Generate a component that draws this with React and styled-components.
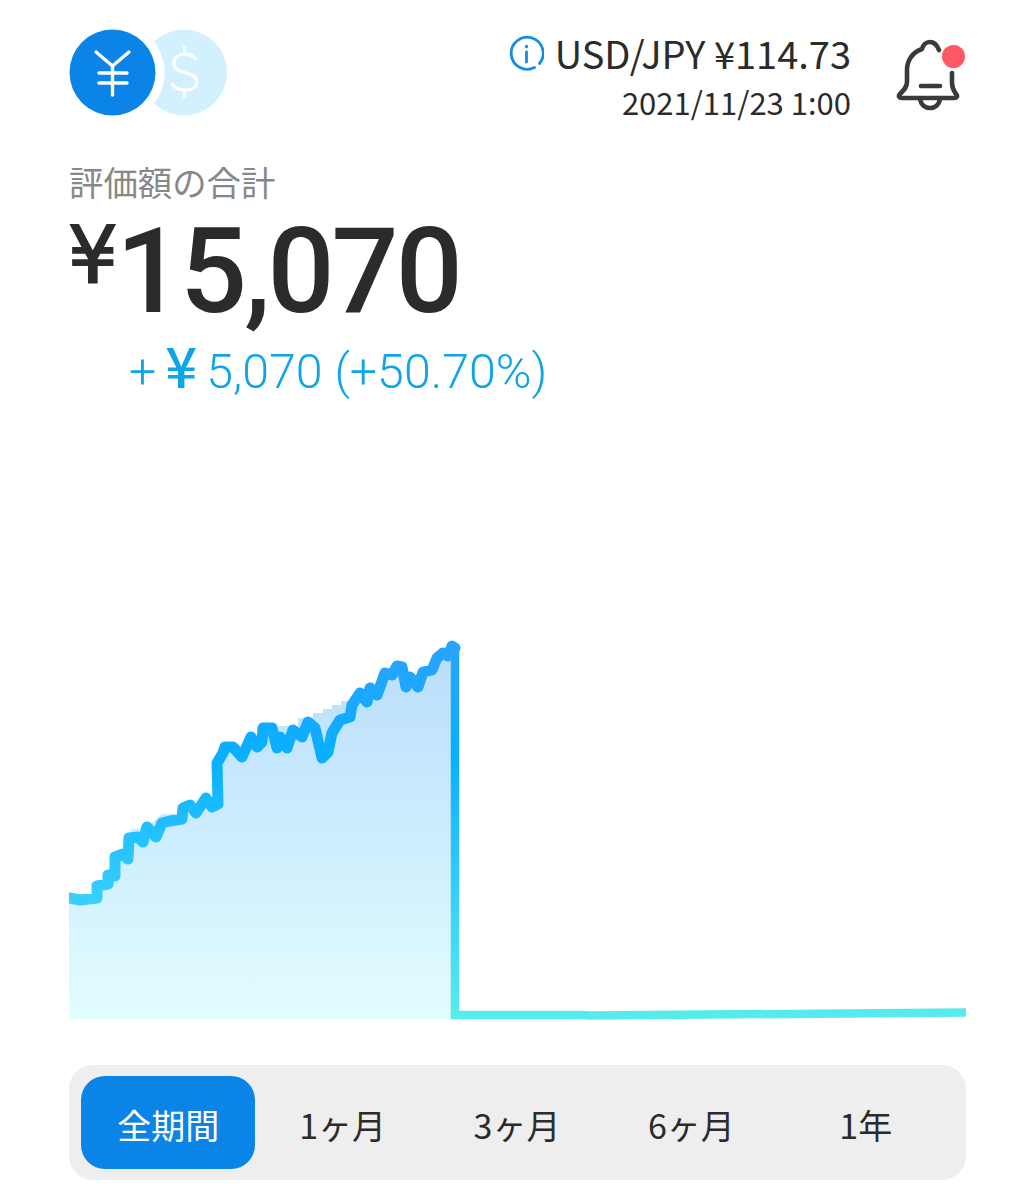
import React from 'react';
import styled, { createGlobalStyle } from 'styled-components';

const GlobalStyle = createGlobalStyle`
  html, body {
    margin: 0;
    padding: 0;
    background: #fff;
  }
  body {
    font-family: "Noto Sans CJK JP", "Noto Sans", sans-serif;
    color: #2b2b2b;
  }
`;

const Page = styled.div`
  width: 1035px;
  height: 1200px;
  box-sizing: border-box;
  padding: 29px 69px 0;
  overflow: hidden;
`;

const Header = styled.header`
  display: flex;
  justify-content: space-between;
  align-items: flex-start;
  height: 87px;
`;

const RateBlock = styled.div`
  display: flex;
  margin-left: auto;
  gap: 45px;
`;

const RateText = styled.div`
  display: flex;
  flex-direction: column;
  align-items: flex-end;
`;

const RateRow = styled.div`
  display: flex;
  align-items: center;
  gap: 11px;
  height: 48px;
  font-size: 38px;
  line-height: 48px;
`;

const RateDate = styled.div`
  margin-top: 5px;
  font-size: 31px;
  line-height: 40px;
`;

const BellWrap = styled.div`
  position: relative;
  width: 70px;
  height: 87px;
`;

const Dot = styled.span`
  position: absolute;
  top: 16px;
  right: 1px;
  width: 23px;
  height: 23px;
  border-radius: 50%;
  background: #ff5763;
`;

const Summary = styled.section`
  margin-top: 42px;
`;

const Label = styled.div`
  font-size: 34.4px;
  line-height: 46px;
  color: #888;
`;

const Total = styled.div`
  display: flex;
  align-items: flex-start;
  height: 118px;
  margin-top: 9px;
  font-family: Roboto, sans-serif;
  font-weight: 500;
  font-size: 118px;
  line-height: 118px;
  letter-spacing: -3px;
  color: #2b2b2b;
`;

const TotalSign = styled.span`
  width: 48px;
  margin-left: -1px;
  font-family: "DejaVu Sans", sans-serif;
  font-size: 78px;
  font-weight: 400;
  line-height: 84px;
  letter-spacing: 0;
  -webkit-text-stroke: 2px #2b2b2b;
`;

const Gain = styled.div`
  display: flex;
  align-items: baseline;
  gap: 9px;
  margin: 5px 0 0 60px;
  font-family: Roboto, sans-serif;
  font-weight: 300;
  font-size: 48.3px;
  line-height: 56px;
  color: #0ea5e6;
`;

const GainYen = styled.span`
  font-family: "Noto Sans CJK JP", sans-serif;
  font-weight: 500;
  font-size: 56px;
  line-height: 56px;
`;

const ChartSvg = styled.svg`
  display: block;
  width: 897px;
  height: 380px;
  margin-top: 240px;
`;

const Tabs = styled.nav`
  display: grid;
  grid-template-columns: repeat(5, 1fr);
  box-sizing: border-box;
  height: 115px;
  margin-top: 45px;
  padding: 11px 13px 11px 12px;
  border-radius: 24px;
  background: #eee;
`;

const Tab = styled.div`
  display: flex;
  align-items: center;
  justify-content: center;
  box-sizing: border-box;
  padding-top: 3px;
  border-radius: 24px;
  font-size: 34px;
  color: ${(p) => (p.$active ? '#fff' : '#2b2b2b')};
  background: ${(p) => (p.$active ? '#0a84e6' : 'transparent')};
`;

const line = [
  [69, 898], [80, 900], [97, 898], [97, 886], [108, 884], [108, 875], [115, 876], [115, 857],
  [123, 854], [128, 859], [129, 838], [138, 837], [143, 842], [147, 827], [156, 837], [162, 823],
  [170, 821], [182, 819], [183, 808], [190, 805], [196, 813], [200, 807], [206, 798], [212, 807],
  [218, 804], [217, 763], [223, 753], [225, 747], [233, 747], [242, 757], [251, 737], [257, 747],
  [262, 742], [263, 728], [272, 728], [277, 748], [280, 737], [287, 748], [293, 730], [302, 737],
  [308, 722], [315, 728], [322, 758], [328, 752], [332, 733], [340, 720], [350, 717], [352, 705],
  [360, 693], [367, 702], [370, 688], [377, 695], [385, 673], [392, 675], [397, 666], [402, 667],
  [406, 687], [410, 677], [418, 687], [423, 672], [432, 670], [437, 658], [443, 653], [448, 656],
  [452, 646], [455, 648],
];

// fill follows the line, but with its own stepped top in the flat stretch
const fillTop = [
  ...line.slice(0, 13), [129, 830], [147, 827], [162, 814], [182, 814], [183, 808],
  ...line.slice(19, 35), [280, 726], [298, 726], [298, 718], [313, 718], [313, 713], [323, 713],
  [323, 709], [332, 709], [332, 705], [341, 705], [341, 701], [352, 701],
  ...line.slice(48),
];

const toPoints = (pts) => pts.map((p) => p.join(',')).join(' ');

const periods = ['全期間', '1ヶ月', '3ヶ月', '6ヶ月', '1年'];

function CoinIcon() {
  return (
    <svg width="160" height="87" viewBox="0 0 160 87" fill="none">
      <circle cx="115" cy="43.5" r="43" fill="#d3f0ff" />
      <circle cx="43.5" cy="43.5" r="52" fill="#fff" />
      <circle cx="43.5" cy="43.5" r="43" fill="#0a84e6" />
      <path
        d="M27 23l16.5 14L60 23M43.5 37v29M30 44h28M30 54h28"
        stroke="#fff"
        strokeWidth="3.4"
        strokeLinecap="round"
        strokeLinejoin="round"
      />
      <path
        d="M115.5 18v7M115.5 61v7M127 30c-3-3-7-5-11-5-6 0-11 3-11 9 0 13 23 7 23 19 0 6-6 8-12 8-5 0-10-2-13-6"
        stroke="#fff"
        strokeWidth="3"
        strokeLinecap="round"
        strokeLinejoin="round"
      />
    </svg>
  );
}

function InfoIcon() {
  return (
    <svg width="35" height="35" viewBox="0 0 35 35" fill="none" stroke="#0f8de8" strokeWidth="2.8" strokeLinecap="round">
      <path d="M30.5 27.5A16 16 0 1 0 25.5 31.5" />
      <path d="M17.5 16v10" />
      <circle cx="17.5" cy="10.5" r="1" fill="#0f8de8" strokeWidth="1.4" />
    </svg>
  );
}

function BellIcon() {
  return (
    <svg width="70" height="87" viewBox="0 0 70 87" fill="none" stroke="#3a3a3a" strokeWidth="4.6" strokeLinecap="round" strokeLinejoin="round">
      <path d="M43 21c-2-5-5-8-9-8-4 0-7 3-8 7-9 3-15 11-15 21v12c0 5-3 8-7 12-2 2-1 4 2 4h52c3 0 4-2 2-4-3-4-4-6-4-11V44" />
      <path d="M25 57h19" />
      <path d="M24 70c1 6 5 9 10 9s9-3 10-9" />
    </svg>
  );
}

function Chart() {
  return (
    <ChartSvg viewBox="69 640 897 380">
      <defs>
        <linearGradient id="area" gradientUnits="userSpaceOnUse" x1="0" y1="650" x2="0" y2="1019">
          <stop offset="0" stopColor="#b9ddfc" />
          <stop offset="1" stopColor="#e2fdff" />
        </linearGradient>
        <linearGradient id="stroke" gradientUnits="userSpaceOnUse" x1="0" y1="646" x2="0" y2="1016">
          <stop offset="0" stopColor="#2aa2ff" />
          <stop offset="0.3" stopColor="#08b0ff" />
          <stop offset="0.6" stopColor="#2fc8ff" />
          <stop offset="1" stopColor="#58ebeb" />
        </linearGradient>
      </defs>
      <polygon points={`${toPoints(fillTop)} 451,1019 69,1019`} fill="url(#area)" />
      <polyline
        points={toPoints(line)}
        fill="none"
        stroke="url(#stroke)"
        strokeWidth="11"
        strokeLinejoin="round"
        strokeLinecap="round"
      />
      <polyline
        points="455,648 455,1015 580,1015 590,1015.5 966,1012.5"
        fill="none"
        stroke="url(#stroke)"
        strokeWidth="8.5"
        strokeLinejoin="miter"
      />
    </ChartSvg>
  );
}

export default function App() {
  return (
    <>
      <GlobalStyle />
      <Page>
        <Header>
          <CoinIcon />
          <RateBlock>
            <RateText>
              <RateRow>
                <InfoIcon />
                USD/JPY ¥114.73
              </RateRow>
              <RateDate>2021/11/23 1:00</RateDate>
            </RateText>
            <BellWrap>
              <BellIcon />
              <Dot />
            </BellWrap>
          </RateBlock>
        </Header>
        <Summary>
          <Label>評価額の合計</Label>
          <Total>
            <TotalSign>¥</TotalSign>15,070
          </Total>
          <Gain>
            +<GainYen>¥</GainYen>5,070 (+50.70%)
          </Gain>
        </Summary>
        <Chart />
        <Tabs>
          {periods.map((label, i) => (
            <Tab key={label} $active={i === 0}>{label}</Tab>
          ))}
        </Tabs>
      </Page>
    </>
  );
}
